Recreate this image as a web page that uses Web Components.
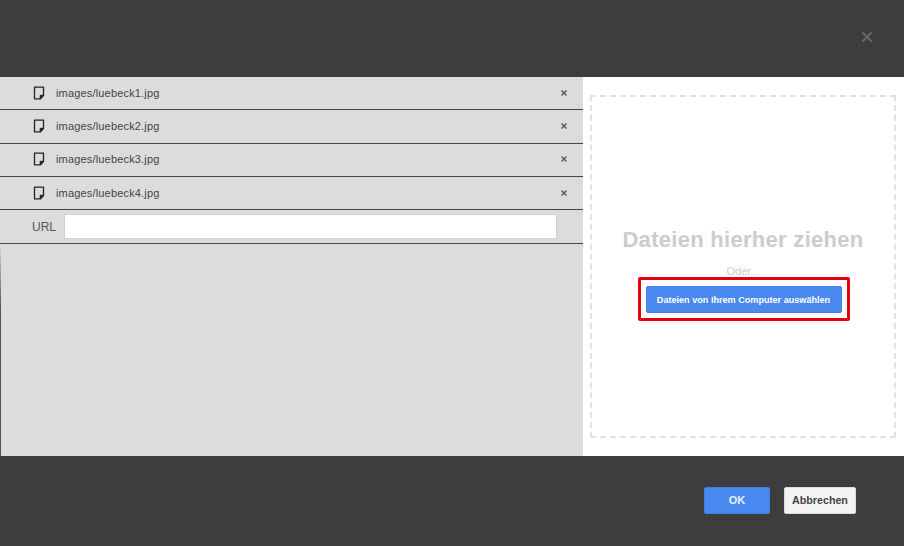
<!DOCTYPE html>
<html lang="de">
<head>
<meta charset="utf-8">
<style>
html,body{margin:0;padding:0;width:904px;height:546px;overflow:hidden;background:#3d3d3d;font-family:"Liberation Sans",Arial,sans-serif}
</style>
</head>
<body>
<template id="t-row">
<style>
:host{display:flex;align-items:center;height:32.3px;border-bottom:1px solid #444;color:#444;font-size:11px}
svg{width:12px;height:14px;margin:0 11px 1px 33px;flex:none;display:block}
.name{flex:1;letter-spacing:.17px;margin-bottom:1px}
</style>
<svg viewBox="0 0 12 14" fill="none"><path d="M1.5 1.2H10.5V9.5L7.5 12.8H1.5Z" stroke="#222" stroke-width="1.3" stroke-linejoin="round"/><path d="M7.2 12.5V9.3H10.5" fill="#222" stroke="#222"/></svg>
<span class="name"><slot></slot></span>
<svg style="margin:0 15px 1px 0;width:8px;height:8px" viewBox="0 0 8 8"><path d="M1.5 1.5L6.5 6.5M6.5 1.5L1.5 6.5" stroke="#555" stroke-width="1.4"/></svg>
</template>

<template id="t-url">
<style>
:host{display:flex;align-items:center;height:33px;border-bottom:1px solid #444;color:#555;font-size:12px}
label{margin-left:32px;width:32px;flex:none}
.f{width:491px;height:23px;margin-bottom:1px;background:#fff;border:1px solid #d2d2d2;flex:none}
</style>
<label>URL</label><div class="f"></div>
</template>

<template id="t-fill">
<style>
:host{display:block;flex:1;background:linear-gradient(#dcdcdc,#555 30%) 0 0/1px 100% no-repeat}
</style>
</template>

<template id="t-drop">
<style>
:host{display:flex;flex-direction:column;align-items:center;flex:1;margin:18px 8px 18px 7px;border:2px dashed #e2e2e2;text-align:center;box-sizing:border-box}
h2{margin:130px 0 0;font-size:22px;line-height:26px;font-weight:700;color:#ccc;letter-spacing:.29px}
p{margin:12px 0 0;font-size:11px;line-height:13px;color:#ccc}
.hl{margin:-1px 0 0 1px;border:3px solid #e4000f;border-radius:2px;padding:6px 5px 5px;display:flex}
</style>
<h2>Dateien hierher ziehen</h2>
<p>Oder...</p>
<div class="hl"><slot></slot></div>
</template>

<template id="t-btn">
<style>
:host{display:inline-flex;align-items:center;justify-content:center;box-sizing:border-box;border-radius:2px;font-weight:700;font-size:var(--fs,12px);width:var(--w);height:var(--h);padding-bottom:var(--pb,0);background:var(--bg);color:var(--fg);border:1px solid var(--bd)}
</style>
<slot></slot>
</template>

<template id="t-x">
<style>
:host{display:block;width:12px;height:12px}
svg{display:block}
</style>
<svg width="12" height="12" viewBox="0 0 12 12"><path d="M1.5 1.5L10.5 10.5M10.5 1.5L1.5 10.5" stroke="#666" stroke-width="2.4"/></svg>
</template>

<template id="t-dialog">
<style>
:host{display:flex;flex-direction:column;width:904px;height:546px;background:#3d3d3d}
.top{height:77px;flex:none;display:flex;justify-content:flex-end;padding:31px 31px 0 0;box-sizing:border-box}
.mid{height:379px;flex:none;display:flex;background:#fff}
.left{width:583px;flex:none;background:#dcdcdc;display:flex;flex-direction:column}
.right{flex:1;display:flex;min-width:0}
.foot{flex:1;display:flex;justify-content:flex-end;align-items:flex-start;gap:14px;padding:31px 48px 0 0;box-sizing:border-box}
</style>
<div class="top"><slot name="close"></slot></div>
<div class="mid">
<div class="left"><slot name="list"></slot></div>
<div class="right"><slot name="drop"></slot></div>
</div>
<div class="foot"><slot name="foot"></slot></div>
</template>

<upload-dialog>
<close-x slot="close"></close-x>
<file-row slot="list">images/luebeck1.jpg</file-row>
<file-row slot="list">images/luebeck2.jpg</file-row>
<file-row slot="list">images/luebeck3.jpg</file-row>
<file-row slot="list">images/luebeck4.jpg</file-row>
<url-row slot="list"></url-row>
<list-fill slot="list"></list-fill>
<drop-zone slot="drop"><ui-btn style="--w:196px;--h:27px;--bg:#4a89f0;--fg:#fff;--bd:#4080e8;--fs:9.1px">Dateien von Ihrem Computer auswählen</ui-btn></drop-zone>
<ui-btn slot="foot" style="--w:66px;--h:27px;--pb:1px;--bg:#4a89f0;--fg:#e8f0ff;--bd:#4080e8;--fs:11px">OK</ui-btn>
<ui-btn slot="foot" style="--w:72px;--h:27px;--pb:1px;--bg:#f3f3f3;--fg:#444;--bd:#ddd;--fs:10.7px">Abbrechen</ui-btn>
</upload-dialog>

<script>
function def(name,tid){
  customElements.define(name,class extends HTMLElement{
    constructor(){super();this.attachShadow({mode:"open"}).appendChild(document.getElementById(tid).content.cloneNode(true));}
  });
}
def("upload-dialog","t-dialog");
def("file-row","t-row");
def("url-row","t-url");
def("list-fill","t-fill");
def("drop-zone","t-drop");
def("ui-btn","t-btn");
def("close-x","t-x");
</script>
</body>
</html>
